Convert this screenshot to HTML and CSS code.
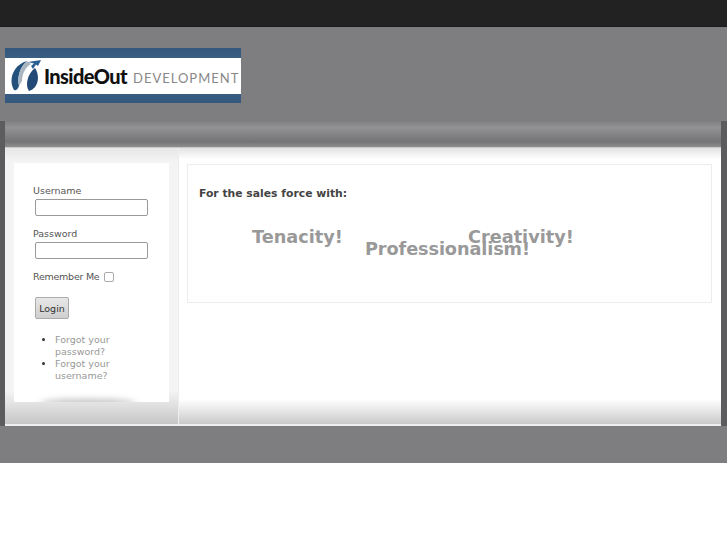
FILE: index.html
```html
<!DOCTYPE html>
<html lang="en">
<head>
    <meta charset="UTF-8">
    <title>InsideOut Development</title>
    <link rel="stylesheet" href="styles.css">
</head>
<body>
    <div class="page">
        <div class="topbar"></div>

        <div class="logo">
            <div class="logo-inner">
                <svg class="logo-icon" width="32" height="32" viewBox="0 0 32 32">
                    <path d="M4 30C-2 20 3 5 17 1C10 7 7 17 9 26C8 29 6 31 4 30Z" fill="#24507e"/>
                    <path d="M17 1C10 7 7 17 9 26L12 21C12 14 15 8 21 4Z" fill="#a9b6c2"/>
                    <path d="M19 31C15 26 17 14 25 8C30 15 29 28 19 31Z" fill="#234a76"/>
                    <path d="M18 2L31 0L28 6L26 4.500L23 9L21 6L24 3.500Z" fill="#2b5f92"/>
                </svg>
                <span class="logo-name">InsideOut</span>
                <span class="logo-dev">DEVELOPMENT</span>
            </div>
        </div>

        <div class="frame">
            <div class="frame-head"></div>
            <div class="frame-body">
                <div class="sidebar">
                    <form class="login">
                        <label for="username">Username</label>
                        <input type="text" id="username">
                        <label for="password">Password</label>
                        <input type="password" id="password">
                        <div class="remember">
                            <label for="remember">Remember Me</label>
                            <span class="check" id="remember"></span>
                        </div>
                        <button type="button">Login</button>
                        <ul class="links">
                            <li><a href="#">Forgot your password?</a></li>
                            <li><a href="#">Forgot your username?</a></li>
                        </ul>
                        <div class="glow"></div>
                    </form>
                </div>
                <div class="main">
                    <div class="card">
                        <h3>For the sales force with:</h3>
                        <div class="words">
                            <span class="word word-1">Tenacity!</span>
                            <span class="word word-2">Professionalism!</span>
                            <span class="word word-3">Creativity!</span>
                        </div>
                    </div>
                </div>
            </div>
        </div>
    </div>
</body>
</html>
```

FILE: styles.css
```css
* {
    margin: 0;
    padding: 0;
    box-sizing: border-box;
}

body {
    font-family: "DejaVu Sans", sans-serif;
    background-color: #fff;
    color: #555;
    font-size: 9.500px;
}

.page {
    height: 463px;
    background-color: #7e7e81;
    overflow: hidden;
}

.topbar {
    height: 27px;
    background-color: #222;
    border-bottom: 1px solid #1b1b1b;
}

.logo {
    width: 236px;
    height: 55px;
    margin: 21px 0 18px 5px;
    padding: 10px 0 9px;
    background: linear-gradient(#33577d, #47688c 50%, #33577d);
}

.logo-inner {
    height: 36px;
    background-color: #fff;
    display: flex;
    align-items: center;
    padding: 0 0 0 5px;
    white-space: nowrap;
}

.logo-icon {
    flex: none;
}

.logo-name {
    font-family: "Lato", sans-serif;
    font-weight: 900;
    font-size: 20px;
    letter-spacing: -0.600px;
    color: #111;
    margin-left: 2px;
}

.logo-dev {
    font-family: "Lato", sans-serif;
    font-size: 13px;
    letter-spacing: 1px;
    color: #888;
    margin-left: 6px;
    padding-top: 3px;
}

.frame {
    height: 305px;
    margin: 0 0 0 5px;
    width: 716px;
    display: flex;
    flex-direction: column;
    box-shadow: -5px 0 0 #5c5c5f, 6px 0 0 #5c5c5f;
    background-color: #fff;
    border-bottom: 2px solid #eee;
}

.frame-head {
    height: 27px;
    background: linear-gradient(#7e7e81, #929295 25%, #747477 80%, #8e8e90);
    border-bottom: 1px solid #c8c8c8;
}

.frame-body {
    flex: 1;
    display: flex;
    background: linear-gradient(#e2e2e2, #fff 11px, #fff 91%, #cacaca);
}

.sidebar {
    width: 174px;
    padding: 15px 9px 22px;
    background: linear-gradient(#e6e6e6, #f4f4f4 5%, #f4f4f4 88%, #c6c6c6);
    border-right: 1px solid #eee;
}

.login {
    height: 100%;
    background-color: #fff;
    padding: 22px 0 0 19px;
    position: relative;
    overflow: hidden;
}

.login label {
    display: block;
    line-height: 12px;
    color: #555;
}

.login input {
    display: block;
    width: 113px;
    height: 17px;
    margin: 2px 0 12px 2px;
    border: 1px solid #999;
    border-radius: 2px;
    background-color: #fff;
}

.remember {
    display: flex;
    align-items: center;
    gap: 5px;
    letter-spacing: -0.250px;
}

.check {
    width: 10px;
    height: 10px;
    border: 1px solid #aaa;
    border-radius: 2px;
}

.login button {
    display: block;
    margin: 14px 0 0 2px;
    width: 34px;
    height: 22px;
    font-family: inherit;
    font-size: 9.500px;
    color: #333;
    background: linear-gradient(#e8e8e8, #cfcfcf);
    border: 1px solid #aaa;
    border-radius: 2px;
}

.links {
    margin: 15px 0 0 22px;
    width: 66px;
    color: #333;
}

.links li {
    line-height: 12px;
}

.links a {
    color: #999;
    text-decoration: none;
}

/* shadow that rises from the bottom edge of the box */
.glow {
    position: absolute;
    left: 26px;
    bottom: -5px;
    width: 96px;
    height: 8px;
    border-radius: 50%;
    background-color: #c4c4c4;
    filter: blur(3px);
}

.main {
    flex: 1;
    padding: 16px 9px 0 8px;
}

.card {
    height: 139px;
    border: 1px solid #ececec;
    padding: 22px 11px;
}

.card h3 {
    font-size: 10.800px;
    font-weight: 700;
    color: #444;
    line-height: 14px;
}

.words {
    position: relative;
}

.word {
    position: absolute;
    font-size: 17.700px;
    font-weight: 700;
    color: #999;
    white-space: nowrap;
}

.word-1 {
    left: 53px;
    top: 26px;
}

.word-2 {
    left: 166px;
    top: 38px;
    letter-spacing: -0.100px;
}

.word-3 {
    left: 269px;
    top: 26px;
}
```
